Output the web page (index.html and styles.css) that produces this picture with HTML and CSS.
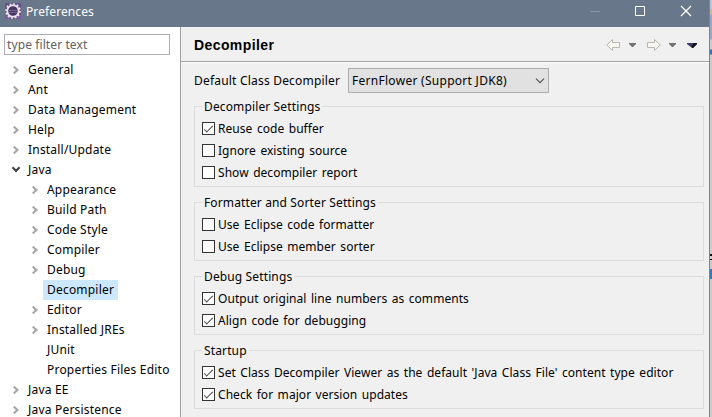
FILE: index.html
```html
<!DOCTYPE html>
<html lang="en">
<head>
<meta charset="utf-8">
<title>Preferences</title>
<link rel="stylesheet" href="styles.css">
</head>
<body>
<div class="screen">
<div class="window">
  <header class="titlebar">
    <svg class="logo" width="16" height="16" viewBox="0 0 16 16"><path fill="#67518a" d="M0 0h16v16H0z"/><path fill="#8057a8" d="M0 10h5v6H0zM12 12h4v4h-4z"/><circle cx="8" cy="8" r="5.7" fill="#453465" stroke="#e8e2e5" stroke-width="1.8"/><circle cx="8" cy="8" r="7" fill="none" stroke="#f0edf0" stroke-width="1.6" stroke-dasharray="1.8 1.865"/><path stroke="#77648d" d="M4 7.5h8M4 9.5h8"/></svg>
    <span class="title">Preferences</span>
    <svg class="controls" width="102" height="12" viewBox="0 0 102 12" fill="none"><path stroke="#8996a5" d="M0 6.5h10"/><path stroke="#fff" d="M45.5 1.500h9v9h-9z"/><path stroke="#fff" stroke-width="1.3" d="m91 1 10 10M101 1 91 11"/></svg>
  </header>
  <main class="body">
    <aside class="sidebar">
      <input class="filter" type="text" placeholder="type filter text" aria-label="Filter">
      <ul class="tree">
        <li><i class="arrow"></i><span>General</span></li>
        <li><i class="arrow"></i><span>Ant</span></li>
        <li><i class="arrow"></i><span>Data Management</span></li>
        <li><i class="arrow"></i><span>Help</span></li>
        <li><i class="arrow"></i><span>Install/Update</span></li>
        <li><i class="arrow open"></i><span>Java</span></li>
        <li class="child"><i class="arrow"></i><span>Appearance</span></li>
        <li class="child"><i class="arrow"></i><span>Build Path</span></li>
        <li class="child"><i class="arrow"></i><span>Code Style</span></li>
        <li class="child"><i class="arrow"></i><span>Compiler</span></li>
        <li class="child"><i class="arrow"></i><span>Debug</span></li>
        <li class="child"><i class="arrow none"></i><span class="selected">Decompiler</span></li>
        <li class="child"><i class="arrow"></i><span>Editor</span></li>
        <li class="child"><i class="arrow"></i><span>Installed JREs</span></li>
        <li class="child"><i class="arrow none"></i><span>JUnit</span></li>
        <li class="child"><i class="arrow none"></i><span>Properties Files Edito</span></li>
        <li><i class="arrow"></i><span>Java EE</span></li>
        <li><i class="arrow"></i><span>Java Persistence</span></li>
      </ul>
    </aside>
    <section class="page">
      <div class="heading">
        <h1>Decompiler</h1>
        <svg width="92" height="14" viewBox="0 0 92 14"><g fill="#f7f6f0" stroke="#b9b7ae"><path d="M.8 7 6.500 1.500v3h7v5h-7v3z"/><path d="M54.200 7 48.500 1.500v3h-7v5h7v3z"/></g><path fill="#737373" d="M23 5h7v1l-3 3h-1l-3-3zM63 5h7v1l-3 3h-1l-3-3z"/><path fill="#3c3870" d="M81 5h10v1l-4 4h-1l-5-4z"/><path fill="#111" d="M88 5h3v1l-4 4h-1V8z"/></svg>
      </div>
      <div class="content">
        <div class="choice"><span class="label">Default Class Decompiler</span><div class="combo"><span>FernFlower (Support JDK8)</span><svg width="10" height="6" viewBox="0 0 10 6"><path d="m1 .7 4 4 4-4" fill="none" stroke="#555" stroke-width="1.2"/></svg></div></div>
        <fieldset class="tall"><legend>Decompiler Settings</legend>
          <label><input type="checkbox" checked><span>Reuse code buffer</span></label>
          <label><input type="checkbox"><span>Ignore existing source</span></label>
          <label><input type="checkbox"><span>Show decompiler report</span></label>
        </fieldset>
        <fieldset><legend>Formatter and Sorter Settings</legend>
          <label><input type="checkbox"><span>Use Eclipse code formatter</span></label>
          <label><input type="checkbox"><span>Use Eclipse member sorter</span></label>
        </fieldset>
        <fieldset><legend>Debug Settings</legend>
          <label><input type="checkbox" checked><span>Output original line numbers as comments</span></label>
          <label><input type="checkbox" checked><span>Align code for debugging</span></label>
        </fieldset>
        <fieldset><legend>Startup</legend>
          <label><input type="checkbox" checked><span>Set Class Decompiler Viewer as the default 'Java Class File' content type editor</span></label>
          <label><input type="checkbox" checked><span>Check for major version updates</span></label>
        </fieldset>
      </div>
    </section>
  </main>
</div>
<div class="backdrop"></div>
</div>
</body>
</html>
```
FILE: styles.css
```css
* { box-sizing: border-box; }
body { margin: 0; overflow: hidden; font: 12px/20px "Noto Sans", sans-serif; color: #000; }
.screen { display: flex; width: 712px; height: 417px; }
.window { width: 710px; height: 417px; display: flex; flex-direction: column; border-right: 1px solid #788698; overflow: hidden; }
.titlebar { height: 27px; flex: none; display: flex; align-items: flex-start; background: #68778a; color: #fff; padding: 3px 17px 0 5px; }
.title { margin: -1px 0 0 5px; letter-spacing: .1px; }
.controls { margin: 2px 0 0 auto; }
.body { flex: 1; min-height: 0; display: flex; }
.sidebar { width: 181px; flex: none; background: #fff; border-right: 1px solid #a0a0a0; padding: 7px 0 0 4px; overflow: hidden; }
.filter { display: block; width: 166px; height: 21px; border: 1px solid #abadb3; padding: 0 2px; font: inherit; letter-spacing: .1px; outline: 0; }
.filter::placeholder { color: #606060; opacity: 1; }
.tree { list-style: none; margin: 5px 0 0; padding: 0; width: 166px; }
.tree li { display: flex; align-items: center; height: 20px; padding-left: 7px; white-space: nowrap; }
.tree .child { padding-left: 26px; }
.tree span { padding: 0 4px; letter-spacing: .2px; }
.tree .selected { background: #cce8ff; }
.arrow { flex: none; width: 9px; height: 10px; margin-right: 4px; display: grid; place-items: center; }
.arrow::before { content: ""; width: 4px; height: 4px; border: solid #a6a6a6; border-width: 2px 2px 0 0; transform: translateX(-1.5px) rotate(45deg); }
.arrow.open::before { border-color: #404040; transform: translateY(-2px) rotate(135deg); }
.arrow.none::before { display: none; }
.page { flex: 1; min-width: 0; background: #f0f0f0; }
.heading { height: 35px; display: flex; align-items: center; justify-content: space-between; padding: 1px 11px 0 13px; border-bottom: 1px solid #a0a0a0; box-shadow: 0 1px #fff; }
.heading h1 { margin: 0; font: bold 14px "Liberation Sans", sans-serif; letter-spacing: .4px; }
.content { padding: 6px 5px 0 13px; }
.choice { display: flex; align-items: center; height: 25px; }
.label { width: 154px; white-space: nowrap; letter-spacing: .2px; }
.combo { width: 201px; height: 25px; display: flex; align-items: center; justify-content: space-between; padding: 0 3px; border: 1px solid #adadad; background: #e1e1e1; letter-spacing: .28px; }
fieldset { position: relative; margin: 15px 0 0; height: 59px; border: 1px solid #dcdcdc; padding: 11px 0 0 7px; }
fieldset.tall { height: 81px; margin-top: 13px; }
fieldset + fieldset { margin-top: 15px; }
legend { position: absolute; top: -10px; left: 7px; padding: 0 2px; background: #f0f0f0; letter-spacing: .13px; white-space: nowrap; }
label { display: flex; align-items: center; height: 22px; gap: 3px; white-space: nowrap; letter-spacing: .05px; word-spacing: 1.3px; }
input[type="checkbox"] { appearance: none; display: grid; place-items: center; width: 13px; height: 13px; margin: -1px 0 0; border: 1px solid #333; background: #fff; flex: none; }
input[type="checkbox"]:checked::before { content: ""; width: 8px; height: 3px; border: solid #444; border-width: 0 0 1.500px 1.500px; transform: translateY(-1px) rotate(-45deg); }
.backdrop { width: 2px; background: linear-gradient(#bcc5dc 9px, #c5bb9c 9px 14px, #99a9c4 15px 39px, #c8ccd1 40px 49px, #3672b8 50px 54px, #cbcbcb 55px 254px, #111 254px 256px, #cbcbcb 256px 259px, #111 259px 260px, #cbcbcb 260px 269px, #3778b5 269px 279px, #cbcbcb 279px); }
```
